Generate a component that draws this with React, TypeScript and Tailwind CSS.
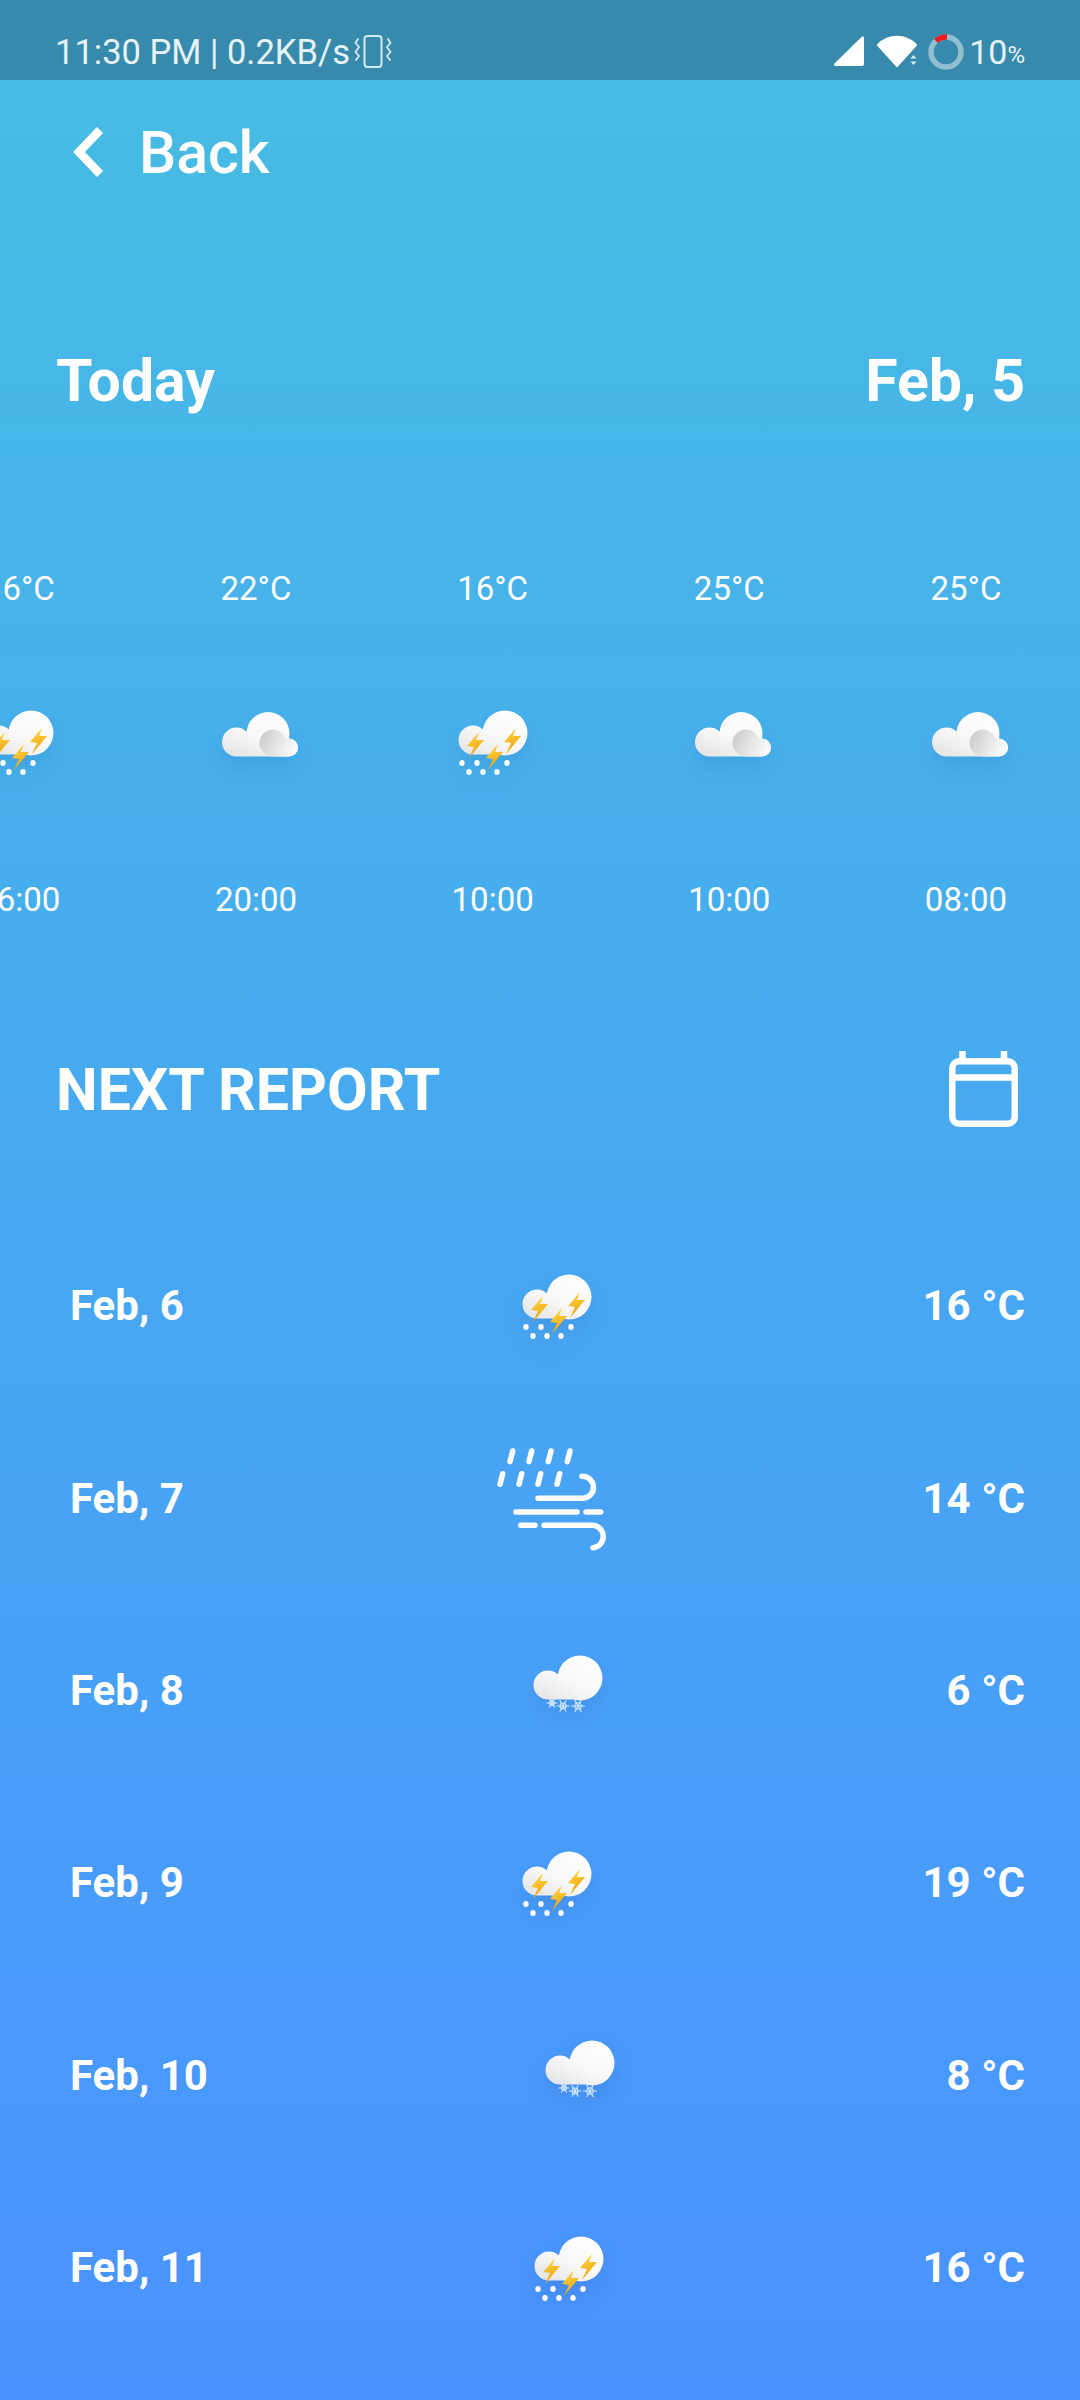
const hours = [
  { temp: '16°C', icon: 'thunder', time: '16:00' },
  { temp: '22°C', icon: 'cloud', time: '20:00' },
  { temp: '16°C', icon: 'thunder', time: '10:00' },
  { temp: '25°C', icon: 'cloud', time: '10:00' },
  { temp: '25°C', icon: 'cloud', time: '08:00' },
]

const days = [
  { date: 'Feb, 6', icon: 'thunder', temp: '16 °C' },
  { date: 'Feb, 7', icon: 'wind', temp: '14 °C' },
  { date: 'Feb, 8', icon: 'snow', temp: '6 °C' },
  { date: 'Feb, 9', icon: 'thunder', temp: '19 °C' },
  { date: 'Feb, 10', icon: 'snow', temp: '8 °C' },
  { date: 'Feb, 11', icon: 'thunder', temp: '16 °C' },
]

const shadow = 'shrink-0 drop-shadow-[0_10px_10px_rgba(30,80,160,0.14)]'

// circle as a subpath, so a whole cloud shares one gradient box
const circle = (cx: number, cy: number, r: number) =>
  `M${cx - r} ${cy}a${r} ${r} 0 1 0 ${2 * r} 0a${r} ${r} 0 1 0 ${-2 * r} 0Z`

function Bolt({ x, y }: { x: number; y: number }) {
  return (
    <polygon
      transform={`translate(${x} ${y})`}
      points="12,0 0,14 7,15 2,26 17,8 9,8"
      fill="url(#bolt)"
    />
  )
}

function Defs() {
  return (
    <defs>
      <linearGradient id="bolt" x1="0" y1="0" x2="0.3" y2="1">
        <stop offset="0" stopColor="#ffe14a" />
        <stop offset="1" stopColor="#f0a00f" />
      </linearGradient>
      <linearGradient id="puff" x1="0.85" y1="0.05" x2="0.15" y2="1">
        <stop offset="0" stopColor="#ffffff" />
        <stop offset="0.55" stopColor="#f8f8f8" />
        <stop offset="1" stopColor="#e4e4e4" />
      </linearGradient>
      <linearGradient id="shade" x1="0" y1="0.3" x2="1" y2="0.6">
        <stop offset="0" stopColor="#cbcbcb" />
        <stop offset="0.5" stopColor="#e6e6e6" />
        <stop offset="1" stopColor="#fbfbfb" />
      </linearGradient>
    </defs>
  )
}

function Puff({ dy = 0 }: { dy?: number }) {
  return (
    <path
      transform={`translate(0 ${dy})`}
      fill="url(#puff)"
      d={`${circle(28, 45, 14.5)}${circle(60, 38, 22.5)}M28 45V59.500H60V38H28Z`}
    />
  )
}

function ThunderIcon({ inRow }: { inRow?: boolean }) {
  const drops = [
    [17, 68],
    [32, 68],
    [62, 68],
    [24, 77],
    [38, 77],
    [52, 77],
  ]
  return (
    <svg width="100" height="90" viewBox={inRow ? '-6 0 100 90' : '-2 0 100 90'} className={shadow}>
      <Defs />
      <Puff />
      {drops.map(([cx, cy]) => (
        <ellipse key={`${cx}-${cy}`} cx={cx} cy={cy} rx="2.700" ry="3" fill="#fff" />
      ))}
      <Bolt x={22} y={37} />
      <Bolt x={41} y={49} />
      <Bolt x={59} y={33} />
    </svg>
  )
}

function CloudIcon() {
  return (
    <svg width="120" height="90" viewBox="-1 5 120 90" className={shadow}>
      <Defs />
      <path
        fill="url(#puff)"
        d={`${circle(39.5, 52, 14.5)}${circle(71, 43.5, 21.5)}${circle(92, 57.5, 9)}M39.500 52V66.500H92V50H39.500Z`}
      />
      <path
        fill="url(#shade)"
        d={`${circle(76, 53, 13.5)}${circle(92, 57.5, 9)}M76 53V66.500H92V48.500H76Z`}
      />
    </svg>
  )
}

function Flake({ x, y, r }: { x: number; y: number; r: number }) {
  return (
    <g transform={`translate(${x} ${y})`} stroke="#d7ecfb" strokeWidth="1.100" strokeLinecap="round">
      <path d={`M${-r} 0H${r}`} />
      <path d={`M${-r / 2} ${-r * 0.87}L${r / 2} ${r * 0.87}`} />
      <path d={`M${-r / 2} ${r * 0.87}L${r / 2} ${-r * 0.87}`} />
      <circle r={r * 0.5} fill="none" />
    </g>
  )
}

function SnowIcon() {
  return (
    <svg width="100" height="90" viewBox="-5 -16 100 90" className={shadow}>
      <Defs />
      <Flake x={32} y={43} r={5} />
      <Flake x={43} y={46} r={6} />
      <Flake x={58} y={46} r={6.500} />
      <Puff dy={-20} />
    </svg>
  )
}

function WindIcon() {
  return (
    <svg
      width="120"
      height="110"
      viewBox="53 11 120 110"
      fill="none"
      stroke="#fff"
      strokeWidth="5.500"
      strokeLinecap="round"
      className="shrink-0"
    >
      <path d="M72.700 20L70 30.700M91.700 20L89 30.700M111 20L108.300 30.700M130 20L127.300 30.700" />
      <path d="M62.700 42.700L60 53.300M81.700 42.700L79 53.300M100.700 42.700L98 53.300M119.700 42.700L117 53.300" />
      <path d="M98 67.300H143A11 11 0 0 0 142 45.300" />
      <path d="M76 81H137M146 81H160.700" />
      <path d="M80.700 94.300H95M104 94.300H151A11.200 11.200 0 0 1 153 116.700" />
    </svg>
  )
}

function WeatherIcon({ name, inRow }: { name: string; inRow?: boolean }) {
  if (name === 'thunder') return <ThunderIcon inRow={inRow} />
  if (name === 'cloud') return <CloudIcon />
  if (name === 'snow') return <SnowIcon />
  return <WindIcon />
}

function StatusBar() {
  return (
    <div className="flex h-[80px] items-center justify-between bg-[#378aab] pl-[55px] pr-[55px] pt-[24px] text-[#e6f3f8]">
      <div className="flex items-center">
        <span className="whitespace-nowrap text-[34.5px] leading-none">11:30 PM | 0.2KB/s</span>
        <svg width="38" height="36" viewBox="0 0 38 36" fill="none" stroke="#d5e9f1" strokeWidth="1.800" className="ml-[4px]">
          <rect x="10.500" y="2" width="17" height="31" rx="3" strokeWidth="2" />
          <path d="M4 5L1.500 9L5 13L1.500 18L5 22L2 26M34 5L36.500 9L33 13L36.500 18L33 22L36 26" strokeLinecap="round" />
        </svg>
      </div>
      <div className="flex items-center">
        <svg width="32" height="32" viewBox="0 0 32 32">
          <path d="M31 2V28A2 2 0 0 1 29 30H3C1 30 .5 28.500 1.500 27.500L28 1.500C29.500 0 31 .5 31 2Z" fill="#fff" />
        </svg>
        <svg width="40" height="34" viewBox="0 0 40 34" className="ml-[12px]">
          <path d="M1 10C11 -1 29 -1 39 10L20 31Z" fill="#fff" stroke="#fff" strokeWidth="2" strokeLinejoin="round" />
          <path d="M33.500 23.500L36.500 20L39.500 23.500ZM33.500 26.500H39.500L36.500 30Z" fill="#d9ecf3" />
        </svg>
        <svg width="36" height="36" viewBox="0 0 36 36" fill="none" strokeWidth="5.500" className="ml-[11px]">
          <circle cx="18" cy="18" r="15" stroke="rgba(255,255,255,0.45)" />
          <path d="M8 7A15 15 0 0 1 19 3" stroke="#ee1c25" />
        </svg>
        <span className="ml-[5px] text-[34px] leading-none">10</span>
        <span className="text-[24px] leading-none mt-[6px]">%</span>
      </div>
    </div>
  )
}

export default function App() {
  return (
    <div className="h-[2400px] w-[1080px] overflow-hidden bg-linear-to-b from-[#47bde2] to-[#4a92ff] font-[Roboto,sans-serif] text-white">
      <StatusBar />

      <div className="flex h-[144px] items-center pl-[73px]">
        <svg width="32" height="50" viewBox="0 0 32 50" fill="none" stroke="#fff" strokeWidth="8.500" className="shrink-0">
          <path d="M27 3L6 25L27 47" />
        </svg>
        <span className="ml-[34px] text-[59px] font-medium leading-none">Back</span>
      </div>

      <div className="mt-[126px] flex h-[60px] items-center justify-between pl-[56px] pr-[55px] text-[59px] font-bold leading-none">
        <span>Today</span>
        <span>Feb, 5</span>
      </div>

      <div className="mt-[158px] ml-[-99px] flex w-[1300px]">
        {hours.map((h, i) => (
          <div key={i} className="flex w-[236.67px] shrink-0 flex-col items-center text-[33px]">
            <div className="flex h-[40px] items-center leading-none">{h.temp}</div>
            <div className="mt-[87px] flex h-[90px] justify-center">
              <WeatherIcon name={h.icon} />
            </div>
            <div className="mt-[94px] flex h-[40px] items-center leading-none">{h.time}</div>
          </div>
        ))}
      </div>

      <div className="mt-[131px] flex h-[78px] items-center justify-between pl-[56px] pr-[61px]">
        <h2 className="text-[59px] font-bold leading-none">NEXT REPORT</h2>
        <svg width="70" height="78" viewBox="0 0 70 78" fill="none" stroke="#fff" strokeWidth="6.500">
          <rect x="3.250" y="11.250" width="62.500" height="62.500" rx="7" />
          <path d="M3 27.500H66M13.500 1V9M55 1V9" />
        </svg>
      </div>

      <div className="mt-[80px]">
        {days.map((d) => (
          <div key={d.date} className="flex h-[192.4px] items-center justify-between pl-[70px] pr-[55px] text-[42px] font-bold">
            <span className="pt-[3px]">{d.date}</span>
            <WeatherIcon name={d.icon} inRow />
            <span className="pt-[3px]">{d.temp}</span>
          </div>
        ))}
      </div>
    </div>
  )
}
